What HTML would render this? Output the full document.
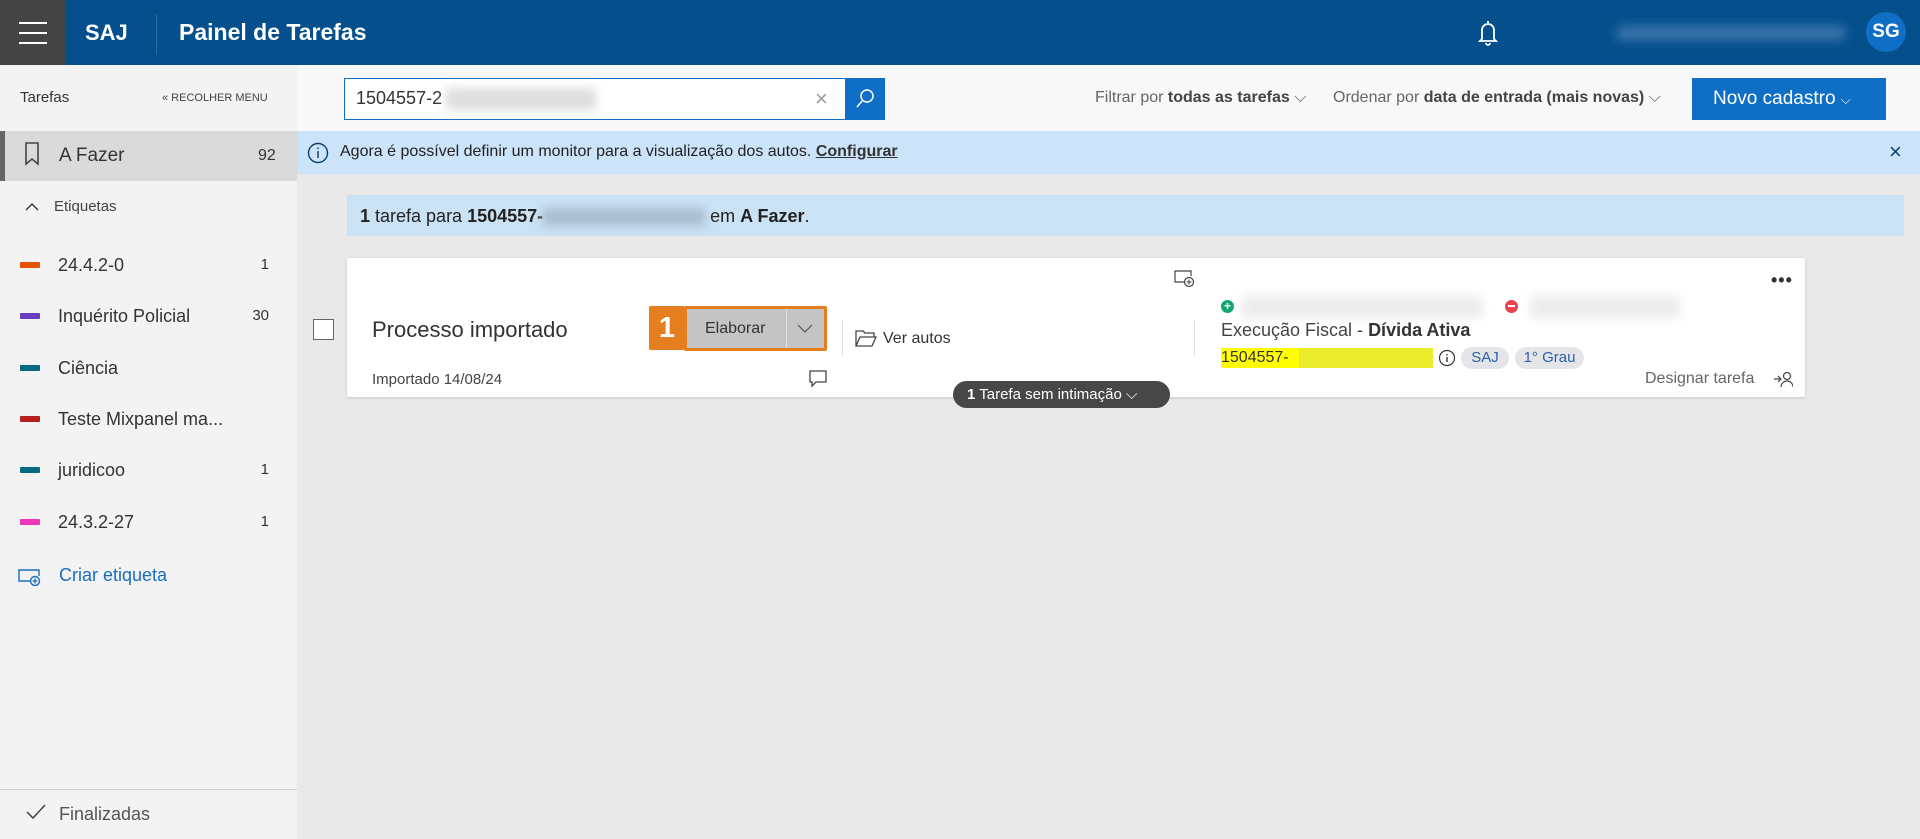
<!DOCTYPE html>
<html><head><meta charset="utf-8"><style>
*{margin:0;padding:0;box-sizing:border-box}
body{width:1920px;height:839px;overflow:hidden;font-family:"Liberation Sans",sans-serif;background:#e9e9e9;position:relative;color:#333}
.a{position:absolute}
.hdr{left:0;top:0;width:1920px;height:65px;background:#05508c}
.side{left:0;top:65px;width:297px;height:774px;background:#f3f3f3}
.tb{left:297px;top:65px;width:1623px;height:66px;background:#f8f8f8}
.lbl{position:absolute;left:20px;width:20px;height:6px;border-radius:1px}
.lt{position:absolute;left:58px;font-size:18px;color:#333;line-height:22px}
.lc{position:absolute;right:28px;font-size:15px;color:#333;line-height:22px}
.blur{filter:blur(5px)}
</style></head><body>
<div class="a hdr"></div>
<div class="a" style="left:0;top:0;width:66px;height:65px;background:#444"></div>
<div class="a" style="left:19px;top:22px;width:28px;height:2px;background:#fff"></div>
<div class="a" style="left:19px;top:32px;width:28px;height:2px;background:#fff"></div>
<div class="a" style="left:19px;top:42px;width:28px;height:2px;background:#fff"></div>
<div class="a" style="left:85px;top:20px;color:#fff;font-weight:bold;font-size:22px">SAJ</div>
<div class="a" style="left:156px;top:14px;width:1px;height:40px;background:#2a6aa6"></div>
<div class="a" style="left:179px;top:19px;color:#fff;font-weight:bold;font-size:23px">Painel de Tarefas</div>
<svg class="a" style="left:1477px;top:19px" width="22" height="28" viewBox="0 0 22 28"><path d="M11 2v2M5 20V11a6 6 0 0 1 12 0v9l2 2H3l2-2zM9 24a2 2 0 0 0 4 0" fill="none" stroke="#fff" stroke-width="1.8"/></svg>
<div class="a blur" style="left:1616px;top:26px;width:230px;height:14px;background:#3a74ab;border-radius:6px"></div>
<div class="a" style="left:1866px;top:12px;width:40px;height:40px;border-radius:50%;background:#0f6fc6;color:#fff;font-weight:bold;font-size:19px;text-align:center;line-height:40px">SG</div>

<div class="a side"></div>
<div class="a" style="left:20px;top:89px;font-size:15px;color:#333">Tarefas</div>
<div class="a" style="left:162px;top:92px;font-size:11px;color:#444">« RECOLHER MENU</div>
<div class="a" style="left:0;top:131px;width:297px;height:50px;background:#dadada;border-left:5px solid #666"></div>
<svg class="a" style="left:24px;top:142px" width="16" height="24" viewBox="0 0 16 24"><path d="M2 1h12v21l-6-5-6 5z" fill="none" stroke="#444" stroke-width="1.6"/></svg>
<div class="a" style="left:59px;top:145px;font-size:19px;color:#333">A Fazer</div>
<div class="a" style="left:258px;top:147px;font-size:16px;color:#333">92</div>
<svg class="a" style="left:25px;top:202px" width="14" height="10"><path d="M1 8l6-6 6 6" fill="none" stroke="#333" stroke-width="1.4"/></svg>
<div class="a" style="left:54px;top:198px;font-size:15px;color:#444">Etiquetas</div>

<div class="a" style="left:0;top:253px;width:297px;height:300px">
<div class="lbl" style="top:9px;background:#e35205"></div><div class="lt" style="top:1px">24.4.2-0</div><div class="lc" style="top:1px">1</div>
<div class="lbl" style="top:60px;background:#6a3dbe"></div><div class="lt" style="top:52px">Inquérito Policial</div><div class="lc" style="top:52px">30</div>
<div class="lbl" style="top:112px;background:#036c80"></div><div class="lt" style="top:104px">Ciência</div>
<div class="lbl" style="top:163px;background:#b3201f"></div><div class="lt" style="top:155px">Teste Mixpanel ma...</div>
<div class="lbl" style="top:214px;background:#036c80"></div><div class="lt" style="top:206px">juridicoo</div><div class="lc" style="top:206px">1</div>
<div class="lbl" style="top:266px;background:#f236b8"></div><div class="lt" style="top:258px">24.3.2-27</div><div class="lc" style="top:258px">1</div>
</div>
<svg class="a" style="left:18px;top:568px" width="24" height="18" viewBox="0 0 24 18"><path d="M12 13H1V2h20v6" fill="none" stroke="#1a6cc0" stroke-width="1.4"/><circle cx="17" cy="13" r="4.5" fill="none" stroke="#1a6cc0" stroke-width="1.4"/><path d="M17 10.5v5M14.5 13h5" stroke="#1a6cc0" stroke-width="1.3"/></svg>
<div class="a" style="left:59px;top:565px;font-size:18px;color:#1a6cc0">Criar etiqueta</div>
<div class="a" style="left:0;top:789px;width:297px;height:1px;background:#d0d0d0"></div>
<svg class="a" style="left:26px;top:804px" width="20" height="16"><path d="M1 8l6 6L19 1" fill="none" stroke="#444" stroke-width="1.5"/></svg>
<div class="a" style="left:59px;top:804px;font-size:18px;color:#555">Finalizadas</div>

<div class="a tb"></div>
<div class="a" style="left:344px;top:78px;width:541px;height:42px;border:1px solid #0f6fc6;background:#fff"></div>
<div class="a" style="left:356px;top:88px;font-size:18px;color:#333">1504557-2</div>
<div class="a blur" style="left:446px;top:88px;width:150px;height:22px;background:#ddd"></div>
<div class="a" style="left:815px;top:86px;font-size:22px;color:#999">×</div>
<div class="a" style="left:845px;top:78px;width:40px;height:42px;background:#0f6fc6"></div>
<svg class="a" style="left:855px;top:88px" width="20" height="22"><circle cx="12" cy="8" r="6" fill="none" stroke="#fff" stroke-width="1.5"/><path d="M8 12l-6 7" stroke="#fff" stroke-width="1.5"/></svg>
<div class="a" style="left:1095px;top:89px;font-size:16px;color:#666">Filtrar por <b style="color:#444">todas as tarefas</b> ⌵</div>
<div class="a" style="left:1333px;top:89px;font-size:16px;color:#666">Ordenar por <b style="color:#444">data de entrada (mais novas)</b> ⌵</div>
<div class="a" style="left:1692px;top:78px;width:194px;height:42px;background:#0f6fc6;color:#fff;font-size:19px;line-height:42px;padding-left:21px">Novo cadastro <span style="font-size:13px">⌵</span></div>

<div class="a" style="left:297px;top:131px;width:1623px;height:43px;background:#cce4f9"></div>
<svg class="a" style="left:307px;top:142px" width="22" height="22"><circle cx="11" cy="11" r="9.5" fill="none" stroke="#0b3f6e" stroke-width="1.4"/><path d="M11 9v7M11 5.5v1.5" stroke="#0b3f6e" stroke-width="1.5"/></svg>
<div class="a" style="left:340px;top:143px;font-size:16px;color:#222">Agora é possível definir um monitor para a visualização dos autos. <b style="text-decoration:underline;color:#333">Configurar</b></div>
<div class="a" style="left:1889px;top:139px;font-size:22px;color:#0b3f6e">×</div>

<div class="a" style="left:347px;top:195px;width:1557px;height:41px;background:#cbe2f5"></div>
<div class="a" style="left:360px;top:206px;font-size:18px;color:#222"><b>1</b> tarefa para <b>1504557-</b><span class="blur" style="display:inline-block;width:162px;height:18px;background:#a9bccd;vertical-align:middle"></span> em <b>A Fazer</b>.</div>

<div class="a" style="left:347px;top:258px;width:1458px;height:139px;background:#fff;box-shadow:0 1px 3px rgba(0,0,0,.15)"></div>
<div class="a" style="left:313px;top:319px;width:21px;height:21px;border:1px solid #666;background:#fff"></div>
<div class="a" style="left:372px;top:317px;font-size:22px;color:#333">Processo importado</div>
<div class="a" style="left:372px;top:371px;font-size:15px;color:#444">Importado 14/08/24</div>
<div class="a" style="left:649px;top:306px;width:36px;height:44px;background:#e57e1e;color:#fff;font-weight:bold;font-size:29px;text-align:center;line-height:44px;border-radius:2px">1</div>
<div class="a" style="left:684px;top:306px;width:143px;height:45px;border:3px solid #e57e1e;background:#c4c4c4;border-radius:2px"></div>
<div class="a" style="left:705px;top:320px;font-size:16px;color:#333">Elaborar</div>
<div class="a" style="left:786px;top:309px;width:1px;height:39px;background:#e0e0e0"></div>
<svg class="a" style="left:797px;top:324px" width="16" height="10"><path d="M1 1l7 7 7-7" fill="none" stroke="#555" stroke-width="1.2"/></svg>
<div class="a" style="left:842px;top:320px;width:1px;height:36px;background:#ddd"></div>
<svg class="a" style="left:855px;top:329px" width="22" height="18"><path d="M1 17V2h7l2 2h9v4M1 17l4-9h16l-4 9z" fill="none" stroke="#444" stroke-width="1.3"/></svg>
<div class="a" style="left:883px;top:330px;font-size:16px;color:#333">Ver autos</div>
<svg class="a" style="left:809px;top:370px" width="18" height="18"><path d="M1 1h16v11H7l-4 4v-4H1z" fill="none" stroke="#444" stroke-width="1.3"/></svg>
<svg class="a" style="left:1174px;top:270px" width="22" height="18"><path d="M10 12H1V1h16v5" fill="none" stroke="#444" stroke-width="1.2"/><circle cx="15" cy="12" r="4.5" fill="none" stroke="#444" stroke-width="1.2"/><path d="M15 9.5v5M12.5 12h5" stroke="#444" stroke-width="1.1"/></svg>
<div class="a" style="left:1194px;top:320px;width:1px;height:36px;background:#ddd"></div>
<div class="a" style="left:1221px;top:300px;width:13px;height:13px;border-radius:50%;background:#13a56e;color:#fff;font-size:12px;font-weight:bold;text-align:center;line-height:13px">+</div>
<div class="a blur" style="left:1242px;top:296px;width:240px;height:22px;background:#ececec"></div>
<div class="a" style="left:1505px;top:300px;width:13px;height:13px;border-radius:50%;background:#e8434e"></div>
<div class="a" style="left:1508px;top:305px;width:7px;height:2px;background:#fff"></div>
<div class="a blur" style="left:1530px;top:296px;width:150px;height:22px;background:#ececec"></div>
<div class="a" style="left:1221px;top:320px;font-size:18px;color:#444">Execução Fiscal - <b style="color:#333">Dívida Ativa</b></div>
<div class="a" style="left:1221px;top:348px;width:212px;height:20px;background:#ecec2e"></div>
<div class="a" style="left:1221px;top:348px;width:78px;height:20px;background:#ffff00;font-size:16px;color:#333;line-height:20px">1504557-</div>
<svg class="a" style="left:1438px;top:349px" width="18" height="18"><circle cx="9" cy="9" r="7.5" fill="none" stroke="#333" stroke-width="1.2"/><path d="M9 8v5M9 5v1.5" stroke="#333" stroke-width="1.4"/></svg>
<div class="a" style="left:1461px;top:347px;width:48px;height:22px;border-radius:11px;background:#e3e5e8;color:#2e5fa5;font-size:15px;text-align:center;line-height:22px">SAJ</div>
<div class="a" style="left:1515px;top:347px;width:69px;height:22px;border-radius:11px;background:#e3e5e8;color:#2e5fa5;font-size:15px;text-align:center;line-height:22px">1° Grau</div>
<div class="a" style="left:1771px;top:270px;font-size:18px;font-weight:bold;color:#333;letter-spacing:1px">•••</div>
<div class="a" style="left:1645px;top:370px;font-size:16px;color:#666">Designar tarefa</div>
<svg class="a" style="left:1773px;top:370px" width="20" height="18"><path d="M1 9h6M5 6l3 3-3 3" fill="none" stroke="#444" stroke-width="1.2"/><circle cx="14" cy="6" r="3.5" fill="none" stroke="#444" stroke-width="1.2"/><path d="M8 17a6 6 0 0 1 12 0" fill="none" stroke="#444" stroke-width="1.2"/></svg>
<div class="a" style="left:953px;top:381px;width:217px;height:27px;border-radius:14px;background:#474747;color:#fff;font-size:15px;line-height:27px;padding-left:14px"><b>1</b> Tarefa sem intimação ⌵</div>
</body></html>
